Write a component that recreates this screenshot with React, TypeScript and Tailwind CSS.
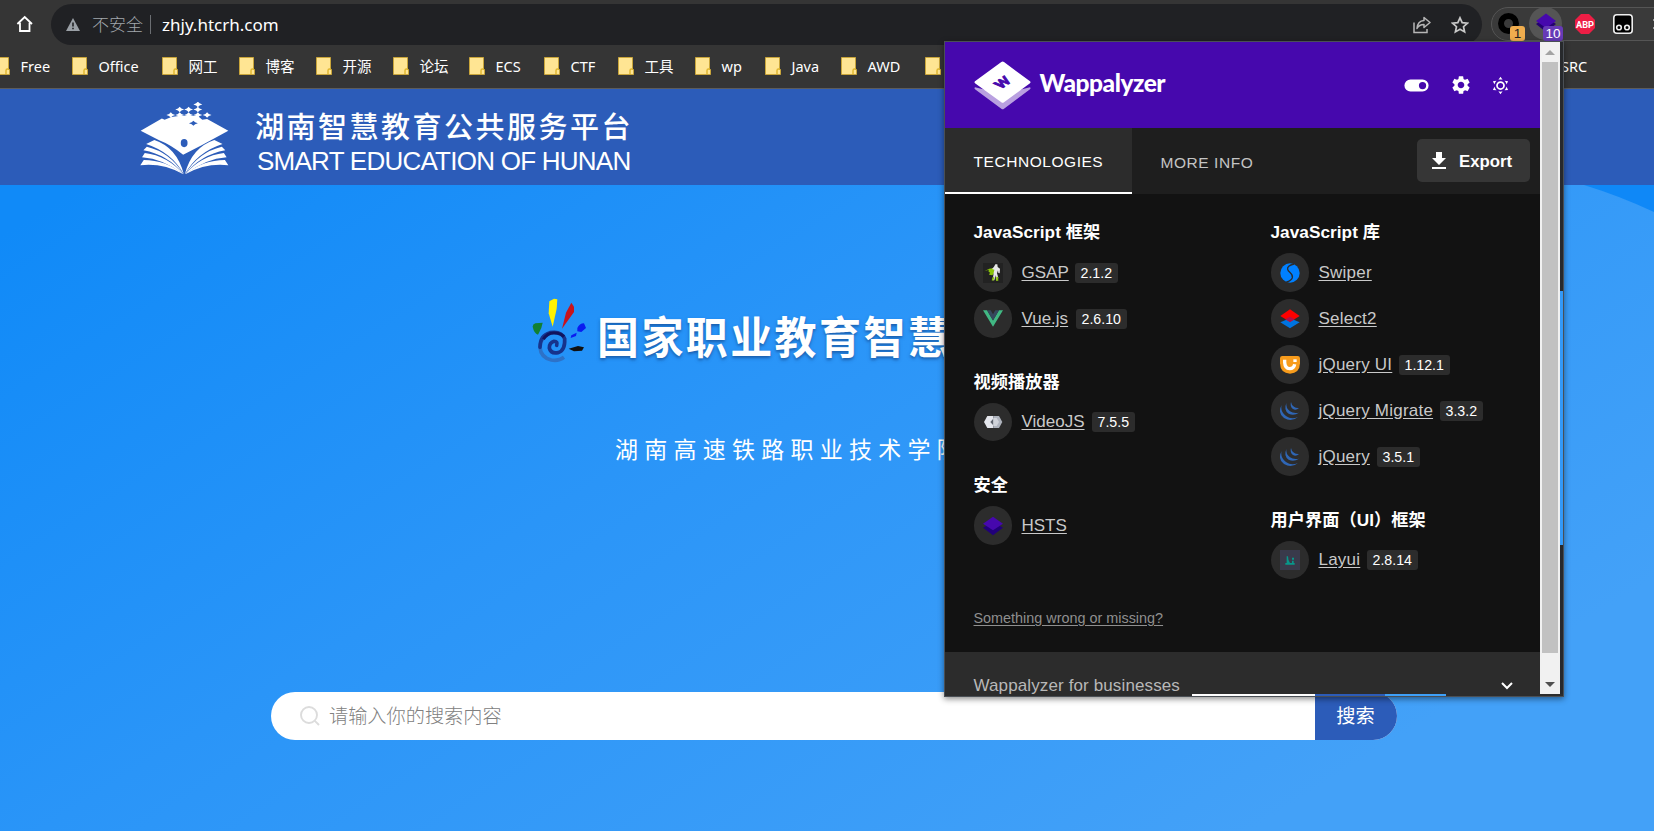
import type { ReactNode } from 'react';
import { MdSettings } from 'react-icons/md';

const bookmarks = [
  { label: 'Free', width: 'w-[78px]' },
  { label: 'Office', width: 'w-[90px]' },
  { label: '网工', width: 'w-[77px]' },
  { label: '博客', width: 'w-[77px]' },
  { label: '开源', width: 'w-[77px]' },
  { label: '论坛', width: 'w-[76px]' },
  { label: 'ECS', width: 'w-[75px]' },
  { label: 'CTF', width: 'w-[74px]' },
  { label: '工具', width: 'w-[77px]' },
  { label: 'wp', width: 'w-[70px]' },
  { label: 'Java', width: 'w-[76px]' },
  { label: 'AWD', width: 'w-[84px]' },
  { label: '', width: 'w-[636px]' },
];

function Folder() {
  return (
    <svg width="16" height="18" viewBox="0 0 16 18" className="shrink-0">
      <path d="M.5.5h14v12h1v5H.5z" fill="#ffe593" stroke="#c9a53a" />
      <path d="M12 17v-3.500q0-1.500 1.500-1.500H15" fill="none" stroke="#e0b62c" strokeWidth="1.400" />
    </svg>
  );
}

function Toolbar() {
  return (
    <div className="flex h-12 items-start bg-[#353535]">
      <svg className="mt-[15px] ml-4 shrink-0" width="18" height="18" viewBox="0 0 18 18">
        <path d="M1.4 9 8.7 2l7.3 7M4 7.8V16h9.5V7.8" fill="none" stroke="#fff" strokeWidth="1.8" />
      </svg>
      <div className="mt-1 ml-[17px] flex h-[41px] w-[1431px] shrink-0 items-center rounded-full bg-[#202124] pl-[15px]">
        <svg width="14" height="13" viewBox="0 0 14 13">
          <path d="M7 0l7 13H0z" fill="#9aa0a6" />
          <path d="M7 4.5v4M7 9.7v1.6" stroke="#202124" strokeWidth="1.6" />
        </svg>
        <span className="ml-[12px] w-[58px] text-[17px] leading-none font-light whitespace-nowrap text-[#a2a7ac]">不安全</span>
        <span className="h-[19px] w-px bg-[#6b6e72]" />
        <span className="-mt-px ml-[11px] text-[17px] leading-none text-white">zhjy.htcrh.com</span>
        <svg className="ml-auto" width="18" height="18" viewBox="0 0 18 18" fill="none" stroke="#b6b6b6" strokeWidth="1.500">
          <path d="M1 6.500V16.500H14V13" />
          <path d="M11 1.500l6 5-6 5V8.500Q6 8.500 4 12.500 4.500 5 11 4.500z" strokeLinejoin="round" />
        </svg>
        <svg className="mr-[13px] ml-5" width="18" height="18" viewBox="0 0 18 18">
          <path d="M9 1.800l2.200 4.900 5.200.5-3.900 3.500 1.100 5.200L9 13.200l-4.600 2.700 1.100-5.200L1.600 7.200l5.200-.5z" fill="none" stroke="#c8c8c8" strokeWidth="1.700" />
        </svg>
      </div>
      <div className="relative mt-[7px] ml-[9px] h-[34px] w-[200px] shrink-0 rounded-full border border-[#555] bg-[#3a3a3a]">
        <span className="absolute top-[5px] left-[6px] size-[21px] rounded-full border-[6px] border-black" />
        <span className="absolute top-[18px] left-[18px] h-[15px] w-[15px] rounded-[3px] bg-[#f0ad4e] text-center font-['Liberation_Sans'] text-[13.500px] leading-[15px] text-[#222]">1</span>
        <span className="absolute -top-px left-[37px] size-[33px] rounded-full bg-[#555]" />
        <svg className="absolute top-[5px] left-[44px]" width="20" height="20" viewBox="0 0 20 20">
          <path d="M0 11l10-7 10 7-10 8z" fill="#240071" />
          <path d="M0 8l10-7.500L20 8l-10 7z" fill="#4608ad" />
        </svg>
        <span className="absolute top-[18px] left-[51px] h-[15px] w-5 rounded-[3px] bg-[#673ab7] text-center font-['Liberation_Sans'] text-[13.500px] leading-[15px] text-white">10</span>
        <svg className="absolute top-[6px] left-[83px]" width="20" height="20" viewBox="0 0 20 20">
          <path d="M6 0h8l6 6v8l-6 6H6l-6-6V6z" fill="#ed1e45" />
          <text x="10" y="13.500" fill="#fff" textAnchor="middle" fontSize="9.800" fontWeight="700" fontFamily="Roboto" textLength="18" lengthAdjust="spacingAndGlyphs">ABP</text>
        </svg>
        <svg className="absolute top-[6px] left-[121px]" width="20" height="20" viewBox="0 0 20 20">
          <rect x=".8" y=".8" width="18.400" height="18.400" rx="3" fill="#000" stroke="#eee" strokeWidth="1.600" />
          <circle cx="6" cy="13.500" r="2.300" fill="none" stroke="#eee" strokeWidth="1.600" />
          <circle cx="14" cy="13.500" r="2.300" fill="none" stroke="#eee" strokeWidth="1.600" />
        </svg>
        <span className="absolute top-[11px] left-[161px] h-2.5 w-3 border-y-2 border-[#999]" />
      </div>
    </div>
  );
}

function BookmarksBar() {
  return (
    <div className="flex h-[41px] items-center border-b border-[#5c5c5c] bg-[#353535] pb-[4px] text-[14.500px] leading-none whitespace-nowrap text-white">
      <span className="-ml-[6px]" />
      {bookmarks.map((b, i) => (
        <div key={i} className={`${b.width} flex shrink-0 items-center gap-[10.500px]`}>
          <Folder />
          {b.label}
        </div>
      ))}
      <span>SRC</span>
    </div>
  );
}

function BookLogo() {
  const tiles = [[171, 7], [118, 22], [144, 22], [171, 22], [92, 38], [118, 38], [144, 38], [171, 38], [198, 38]];
  return (
    <svg width="91" height="75" viewBox="0 0 264 219" fill="#fff" className="mt-1 shrink-0">
      <path d="M4 84 66 48l8 4 20-8 26-4h50l14 12 14-2 62 34-78 42-54 28Q90 124 58 112z" />
      {tiles.map(([x, y], i) => (
        <path key={i} d={`M${x - 13} ${y}l8-3 5-5 5 5 8 3-8 3-5 5-5-5z`} />
      ))}
      <path d="M145 62l8-3 5-4 5 4 8 3-8 3-5 4-5-4z" fill="#2c5cb9" />
      <ellipse cx="131" cy="120" rx="10" ry="12" fill="#2c5cb9" />
      {[false, true].map((flip) => (
        <g key={String(flip)} transform={flip ? 'translate(263 0) scale(-1 1)' : undefined}>
          <path d="M20 123l24-12q66 22 86 100-36-64-110-88z" />
          <path d="M12 141l10-10q68 16 107 80Q84 154 12 141z" />
          <path d="M8 161l8-12q66 8 113 62-60-46-121-50z" />
          <path d="M3 185l10-16q64 0 116 42-62-34-126-26z" />
        </g>
      ))}
    </svg>
  );
}

function SiteHeader() {
  return (
    <div className="flex h-24 items-center bg-[#2c5cb9] pl-[139px]">
      <BookLogo />
      <div className="mt-[13px] ml-[25px] flex flex-col text-white">
        <span className="text-[29px] leading-[36px] font-medium tracking-[2.500px] whitespace-nowrap">湖南智慧教育公共服务平台</span>
        <span className="-mt-px ml-[2px] font-['Liberation_Sans'] text-[26px] leading-[34px] tracking-[-0.75px] whitespace-nowrap">SMART EDUCATION OF HUNAN</span>
      </div>
    </div>
  );
}

function HandLogo() {
  return (
    <svg width="54" height="66" viewBox="0 0 162 198" className="mt-0.5 shrink-0">
      <path d="M52 10l14-8 10 2-2 28-12 54-12-40z" fill="#fff200" />
      <path d="M118 14l8 12v16L90 92l12-48z" fill="#c8141c" />
      <path d="M2 86q0-8 8-10l22-2-4 16-10 20q-12-4-16-24z" fill="#128032" />
      <path d="M136 90q6-14 20-14l6 14-14 12-12-2zM118 112l16-8-2 10-16 6z" fill="#0a1cf0" />
      <path d="M110 152l28-8 18 4-6 10-24 2z" fill="#111" />
      <path d="M96 178q-16 12-38 8-32-8-34-38 2-26 20-38" fill="none" stroke="#2d72c8" strokeWidth="11" />
      <path d="M24 148q0-36 30-44 34-6 44 18 2 36-20 42-22 4-26-14 0-16 14-20 12 0 8 12" fill="none" stroke="#16338c" strokeWidth="11" strokeLinecap="round" />
      <path d="M34 124q14-24 42-18 12 2 20 10" fill="none" stroke="#11145e" strokeWidth="9" />
    </svg>
  );
}

function Hero() {
  return (
    <div className="relative h-[646px] overflow-hidden bg-[linear-gradient(148deg,#108af8_3%,#2a95f8_40%,#43a1f8_85%)]">
      <svg className="absolute top-0 right-0" width="94" height="60" viewBox="0 0 94 60">
        <path d="M24 0H94V27Q60 11 24 0z" fill="#0f88f7" />
      </svg>
      <div className="flex h-[180px] items-start pt-[111px] pl-[532px]">
        <HandLogo />
        <span className="mt-[8px] ml-[11px] origin-center scale-y-105 text-[42px] leading-[66px] font-bold tracking-[2.400px] whitespace-nowrap text-white [text-shadow:0_2px_3px_rgba(20,70,140,.7)]">国家职业教育智慧</span>
      </div>
      <div className="mt-[67px] pl-[615px] text-[23px] leading-[34px] tracking-[6.250px] whitespace-nowrap text-white">湖南高速铁路职业技术学院</div>
      <div className="mt-[226px] ml-[271px] flex h-12 w-[1126px] overflow-hidden rounded-full bg-white">
        <div className="flex w-[1044px] items-center pl-[29px]">
          <svg width="20" height="20" viewBox="0 0 20 20" fill="none" stroke="#dcdcdc" strokeWidth="1.900">
            <circle cx="9" cy="9" r="8" />
            <path d="M14.800 14.800 19 19" />
          </svg>
          <span className="ml-[9px] text-[19.200px] leading-none font-light text-[#808080]">请输入你的搜索内容</span>
        </div>
        <div className="flex flex-1 items-center justify-center bg-[#2c5cb9] pr-px text-[19.200px] text-white">搜索</div>
      </div>
    </div>
  );
}

function Jquery() {
  return (
    <svg width="20" height="20" viewBox="0 0 60 60" fill="#2f66b5">
      <path d="M5 12Q-8 36 12 51q22 14 42-3-20 9-36-3-18-14-13-33z" />
      <path d="M19 6Q10 28 26 38q15 8 31-3-16 4-27-4Q17 21 19 6z" />
      <path d="M33 3Q29 17 39 24q9 5 18-3-9 1-15-4-8-5-9-14z" />
    </svg>
  );
}

const icons: Record<string, ReactNode> = {
  GSAP: (
    <svg width="20" height="20" viewBox="0 0 60 60">
      <rect width="60" height="60" fill="#222" />
      <path d="M5 24Q20 14 36 15l-2 14-6 8-10-2 3-6-5-4 2-5z" fill="#8ac40a" />
      <path d="M37 4h6l1 8 7 5-1 14-4-1-1-8-3 9 4 13-2 8h-5l-1-16-4 16h-5l3-23 2-9-7-2 6-7z" fill="#e8e8e8" />
      <path d="M29 42l5 1-3 10-5-1zM40 41h5l1 12h-7z" fill="#8ac40a" />
    </svg>
  ),
  'Vue.js': (
    <svg width="20" height="17" viewBox="0 0 60 50">
      <path d="M0 0h12l18 31L48 0h12L30 50z" fill="#41b883" />
      <path d="M12 0h11l7 12 7-12h11L30 31z" fill="#35495e" />
    </svg>
  ),
  VideoJS: (
    <svg width="20" height="14" viewBox="0 0 60 42">
      <path d="M13 3h18v36H13L3 21z" fill="#e4e6ec" />
      <path d="M31 3h17l10 18-10 18H31z" fill="#aeb3bd" />
      <path d="M31 9l10 0 7 12-7 12H31z" fill="#d0d3da" />
      <path d="M30 12v18l-8-9z" fill="#5d636d" />
    </svg>
  ),
  HSTS: (
    <svg width="20" height="20" viewBox="0 0 60 60">
      <path d="M0 35l30-18 30 18-30 23z" fill="#21007a" />
      <path d="M0 23 30 2l30 21-30 20z" fill="#4608ad" />
    </svg>
  ),
  Swiper: (
    <svg width="20" height="20" viewBox="0 0 60 60">
      <circle cx="30" cy="30" r="29" fill="#0080ff" />
      <path d="M42 3Q20 8 23 19c2 10 17 12 14 25Q34 53 19 57" fill="none" stroke="#2c2c2c" strokeWidth="4" />
    </svg>
  ),
  Select2: (
    <svg width="20" height="20" viewBox="0 0 60 60">
      <path d="M1 40l29-12 29 12-29 18z" fill="#0074e0" />
      <path d="M1 21 30 1l29 20-29 18z" fill="#fe0000" />
      <path d="M16 31l14-8 14 8-14 8z" fill="#b0104a" />
    </svg>
  ),
  'jQuery UI': (
    <svg width="20" height="18" viewBox="0 0 60 54">
      <path d="M7 0h46q7 0 7 7v15Q59 52 30 53 1 52 0 22V7q0-7 7-7z" fill="#f89c1c" />
      <path d="M14 11v8Q15 37 29 38q13 0 15-13" fill="none" stroke="#fff" strokeWidth="10" />
      <path d="M40 10h10v8H40z" fill="#fff" />
    </svg>
  ),
  'jQuery Migrate': <Jquery />,
  jQuery: <Jquery />,
  Layui: (
    <svg width="20" height="20" viewBox="0 0 60 60">
      <rect width="60" height="60" fill="#393a4b" />
      <path d="M16 44h28v-5h-3v-7h-5v7h-6q-6-6-6-20h-4v20h-4z" fill="#08978a" />
      <path d="M36 23h6v6h-6z" fill="#08978a" />
    </svg>
  ),
};

const left = [
  { title: 'JavaScript 框架', items: [['GSAP', '2.1.2', 'w-[48px]'], ['Vue.js', '2.6.10', 'w-[49px]']] },
  { title: '视频播放器', items: [['VideoJS', '7.5.5', 'w-[65px]']] },
  { title: '安全', items: [['HSTS', '', 'w-[46px]']] },
];
const right = [
  {
    title: 'JavaScript 库',
    items: [
      ['Swiper', '', 'w-[54px]'],
      ['Select2', '', 'w-[59px]'],
      ['jQuery UI', '1.12.1', 'w-[75px]'],
      ['jQuery Migrate', '3.3.2', 'w-[116px]'],
      ['jQuery', '3.5.1', 'w-[53px]'],
    ],
  },
  { title: '用户界面（UI）框架', items: [['Layui', '2.8.14', 'w-[43px]']] },
];

function Column({ sections, spacing }: { sections: { title: string; items: string[][] }[]; spacing: string }) {
  return (
    <div className="w-[297px] shrink-0">
      {sections.map((s) => (
        <div key={s.title} className="mb-[30.500px]">
          <div className="mb-2 text-[17.200px] leading-[26px] font-bold tracking-[0.05px] text-white">{s.title}</div>
          <div className="flex flex-col gap-[7px]">
            {s.items.map(([name, version, width]) => (
              <div key={name} className="flex h-[39px] items-center">
                <span className="flex size-[38.500px] items-center justify-center rounded-full bg-[#2c2c2c]">{icons[name]}</span>
                <span className={`${width} ${spacing} ml-[9.500px] text-[17px] leading-[20px] whitespace-nowrap text-[#c9c9c9] underline underline-offset-2`}>{name}</span>
                {version && (
                  <span className="ml-[5px] h-5 rounded-[3px] bg-[#2c2c2c] px-[6px] text-[14.200px] leading-[20px] text-white">{version}</span>
                )}
              </div>
            ))}
          </div>
        </div>
      ))}
    </div>
  );
}

function WappalyzerLogo() {
  return (
    <svg width="57" height="49" viewBox="0 0 171 147" className="shrink-0">
      <path d="M3 79l83 20 82-20q3 3 0 6L90 143q-4 3-8 0L3 85q-3-3 0-6z" fill="#b9a0e0" />
      <path d="M3 61 82 3q4-3 8 0l78 58q3 3 0 6L90 124q-4 3-8 0L3 67q-3-3 0-6z" fill="#fff" />
      <text transform="translate(86 65) matrix(.8 -.56 .8 .62 0 0)" textAnchor="middle" y="14" fontSize="40" fontWeight="900" fontFamily="Lato" fill="#4608ad" stroke="#4608ad" strokeWidth="3">W</text>
    </svg>
  );
}

function Popup() {
  return (
    <div className="absolute top-[41px] left-[944px] flex h-[656px] w-[620px] flex-col border border-[#4a4f55] font-['Liberation_Sans','Noto_Sans_CJK_SC',sans-serif] shadow-[0_2px_6px_rgba(0,0,0,.45)]">
      <div className="flex h-[652px]">
        <div className="flex w-[595px] flex-col overflow-hidden bg-[#121212]">
          <div className="flex h-[86px] shrink-0 items-center bg-[#4608ad] pl-[28.500px]">
            <WappalyzerLogo />
            <span className="mb-[3px] ml-[9px] w-[355px] font-['Lato'] text-[24.500px] leading-none font-black tracking-[-0.45px] text-white">Wappalyzer</span>
            <svg className="ml-[7px]" width="29" height="29" viewBox="0 0 24 24" fill="#fff">
              <path d="M17 7H7a5 5 0 0 0 0 10h10a5 5 0 0 0 0-10m0 8a3 3 0 1 1 0-6 3 3 0 0 1 0 6" />
            </svg>
            <MdSettings className="ml-[19px] size-[22px] text-white" />
            <svg className="ml-[18px]" width="21" height="21" viewBox="0 0 24 24" fill="#fff">
              <path d="M12,7A5,5 0 0,1 17,12A5,5 0 0,1 12,17A5,5 0 0,1 7,12A5,5 0 0,1 12,7M12,9A3,3 0 0,0 9,12A3,3 0 0,0 12,15A3,3 0 0,0 15,12A3,3 0 0,0 12,9M12,2L14.39,5.42C13.65,5.15 12.84,5 12,5C11.16,5 10.35,5.15 9.61,5.42L12,2M3.34,7L7.5,6.65C6.9,7.16 6.36,7.78 5.94,8.5C5.5,9.24 5.25,10 5.11,10.79L3.34,7M3.36,17L5.12,13.23C5.26,14 5.53,14.78 5.95,15.5C6.37,16.24 6.91,16.86 7.5,17.37L3.36,17M20.65,7L18.88,10.79C18.74,10 18.47,9.23 18.05,8.5C17.63,7.78 17.1,7.15 16.5,6.64L20.65,7M20.64,17L16.5,17.36C17.09,16.85 17.62,16.22 18.04,15.5C18.46,14.77 18.73,14 18.87,13.21L20.64,17M12,22L9.59,18.56C10.33,18.83 11.14,19 12,19C12.82,19 13.63,18.83 14.37,18.56L12,22Z" />
            </svg>
          </div>
          <div className="flex h-[66px] shrink-0 bg-[#1e1e1e] text-[15.500px] whitespace-nowrap">
            <div className="w-[187px] border-b-2 border-white bg-[#2c2c2c] pl-[28.500px] leading-[67px] tracking-[0.55px] text-white">TECHNOLOGIES</div>
            <div className="w-[285px] pl-[28.500px] leading-[69px] tracking-[0.55px] text-[#c4c4c4]">MORE INFO</div>
            <div className="mt-[11px] flex h-[43px] w-[113px] items-center rounded-[5px] bg-[#363636] pl-[10px] text-[16.800px] font-bold text-white">
              <svg width="24" height="24" viewBox="0 0 24 24" fill="#fff">
                <path d="M5 20h14v-2H5zM19 9h-4V3H9v6H5l7 7z" />
              </svg>
              <span className="mt-0.5 ml-[8px]">Export</span>
            </div>
          </div>
          <div className="flex h-[458px] shrink-0 flex-col pt-[25px] pl-[28.500px]">
            <div className="flex h-[386px]">
              <Column sections={left} spacing="tracking-normal" />
              <Column sections={right} spacing="tracking-[0.22px]" />
            </div>
            <div className="text-[14.400px] leading-[26px] text-[#8f8f8f] underline underline-offset-2">Something wrong or missing?</div>
          </div>
          <div className="flex h-[42px] shrink-0 items-start justify-between bg-[#2c2c2c] pr-[26px] pl-[28.500px]">
            <span className="pt-[24px] text-[17px] leading-5 tracking-[0.12px] text-[#b8b8b8]">Wappalyzer for businesses</span>
            <svg className="mt-[29px]" width="14" height="10" viewBox="0 0 14 10">
              <path d="M2 2l5 5 5-5" fill="none" stroke="#fff" strokeWidth="2" />
            </svg>
          </div>
        </div>
        <div className="flex w-5 flex-col items-center bg-[#f1f1f1]">
          <svg width="20" height="20" viewBox="0 0 20 20">
            <path d="M5 13l5-5 5 5z" fill="#a3a3a3" />
          </svg>
          <div className="h-[591px] w-4 bg-[#c1c1c1]" />
          <svg className="mt-auto" width="20" height="20" viewBox="0 0 20 20">
            <path d="M5 8l5 5 5-5z" fill="#505050" />
          </svg>
        </div>
        <div className="flex flex-1 flex-col bg-[#27292c]">
          <div className="mt-[249px] h-[254px] bg-[#3399f8]" />
        </div>
      </div>
      <div className="flex h-[2px] bg-[#2c2c2c]">
        <div className="ml-[247px] w-[123px] bg-white" />
        <div className="w-[70px] bg-[#2c5cb9]" />
        <div className="w-[61px] bg-[#3ea0f8]" />
      </div>
    </div>
  );
}

export default function App() {
  return (
    <div className="relative h-[831px] w-[1654px] overflow-hidden bg-[#353535] font-['Noto_Sans','Noto_Sans_CJK_SC',sans-serif]">
      <Toolbar />
      <BookmarksBar />
      <SiteHeader />
      <Hero />
      <Popup />
    </div>
  );
}
